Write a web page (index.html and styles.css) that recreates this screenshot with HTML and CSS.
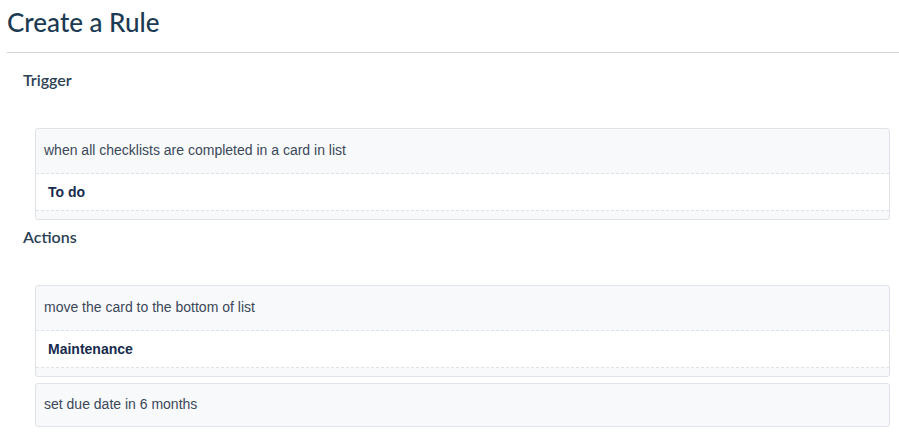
FILE: index.html
```html
<!DOCTYPE html>
<html>
<head>
<meta charset="utf-8">
<link rel="stylesheet" href="styles.css">
</head>
<body>
<div class="page">
  <h1 class="title">Create a Rule</h1>
  <div class="rule-line"></div>
  <h2 class="section-title">Trigger</h2>
  <div class="cards">
    <div class="card">
      <div class="card-text">when all checklists are completed in a card in list</div>
      <div class="card-field">To do</div>
      <div class="card-foot"></div>
    </div>
  </div>
  <h2 class="section-title">Actions</h2>
  <div class="cards">
    <div class="card">
      <div class="card-text">move the card to the bottom of list</div>
      <div class="card-field">Maintenance</div>
      <div class="card-foot"></div>
    </div>
    <div class="card">
      <div class="card-text single">set due date in 6 months</div>
    </div>
  </div>
</div>
</body>
</html>
```
FILE: styles.css
```css
html, body {
  margin: 0;
  padding: 0;
  background: #ffffff;
}
body {
  font-family: Arial, "Liberation Sans", sans-serif;
}
.page {
  padding-left: 7px;
}
.title {
  font-family: Lato, sans-serif;
  font-weight: 500;
  font-size: 26px;
  line-height: 31px;
  color: #1c3a52;
  margin: 7px 0 0 0;
}
.rule-line {
  margin-top: 14px;
  height: 1px;
  background: #d4d4d4;
}
.section-title {
  font-family: Lato, sans-serif;
  font-weight: 600;
  font-size: 16px;
  line-height: 19px;
  color: #2b3f55;
  margin: 17px 0 0 16px;
}
.section-title + .cards {
  margin-top: 39px;
}
.cards {
  margin-left: 28px;
  margin-right: 9px;
  display: flex;
  flex-direction: column;
  gap: 6px;
}
.cards + .section-title {
  margin-top: 7px;
}
.card {
  border: 1px solid #dfe2e7;
  border-radius: 3px;
  background: #f8f9fb;
}
.card-text {
  font-size: 14px;
  line-height: 16px;
  color: #3b4859;
  padding: 13px 8px 15px 8px;
  border-bottom: 1px dashed #dde2e8;
}
.card-text.single {
  border-bottom: none;
  padding: 12px 8px 14px 8px;
}
.card-field {
  font-size: 14px;
  line-height: 16px;
  font-weight: 700;
  color: #172b4d;
  background: #ffffff;
  padding: 10px 12px 10px 12px;
  border-bottom: 1px dashed #dde2e8;
}
.card-foot {
  height: 8px;
}
```
